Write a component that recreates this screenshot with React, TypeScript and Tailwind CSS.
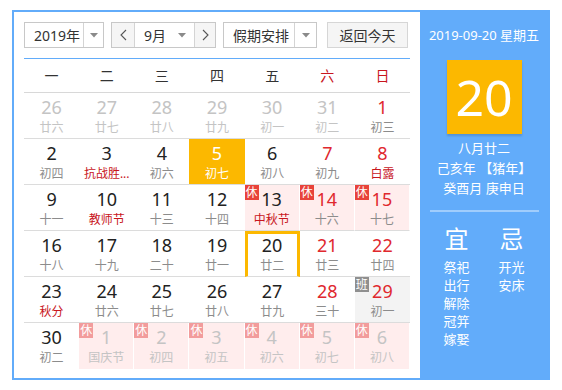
import React from 'react'

type Day = {
  d: number
  l: string
  m: number
  fest?: boolean
  rest?: '休' | '班'
  sel?: boolean
  today?: boolean
}

const days: Day[] = [
  { d: 26, l: '廿六', m: 8 },
  { d: 27, l: '廿七', m: 8 },
  { d: 28, l: '廿八', m: 8 },
  { d: 29, l: '廿九', m: 8 },
  { d: 30, l: '初一', m: 8 },
  { d: 31, l: '初二', m: 8 },
  { d: 1, l: '初三', m: 9 },
  { d: 2, l: '初四', m: 9 },
  { d: 3, l: '抗战胜...', m: 9, fest: true },
  { d: 4, l: '初六', m: 9 },
  { d: 5, l: '初七', m: 9, sel: true },
  { d: 6, l: '初八', m: 9 },
  { d: 7, l: '初九', m: 9 },
  { d: 8, l: '白露', m: 9, fest: true },
  { d: 9, l: '十一', m: 9 },
  { d: 10, l: '教师节', m: 9, fest: true },
  { d: 11, l: '十三', m: 9 },
  { d: 12, l: '十四', m: 9 },
  { d: 13, l: '中秋节', m: 9, fest: true, rest: '休' },
  { d: 14, l: '十六', m: 9, rest: '休' },
  { d: 15, l: '十七', m: 9, rest: '休' },
  { d: 16, l: '十八', m: 9 },
  { d: 17, l: '十九', m: 9 },
  { d: 18, l: '二十', m: 9 },
  { d: 19, l: '廿一', m: 9 },
  { d: 20, l: '廿二', m: 9, today: true },
  { d: 21, l: '廿三', m: 9 },
  { d: 22, l: '廿四', m: 9 },
  { d: 23, l: '秋分', m: 9, fest: true },
  { d: 24, l: '廿六', m: 9 },
  { d: 25, l: '廿七', m: 9 },
  { d: 26, l: '廿八', m: 9 },
  { d: 27, l: '廿九', m: 9 },
  { d: 28, l: '三十', m: 9 },
  { d: 29, l: '初一', m: 9, rest: '班' },
  { d: 30, l: '初二', m: 9 },
  { d: 1, l: '国庆节', m: 10, rest: '休' },
  { d: 2, l: '初四', m: 10, rest: '休' },
  { d: 3, l: '初五', m: 10, rest: '休' },
  { d: 4, l: '初六', m: 10, rest: '休' },
  { d: 5, l: '初七', m: 10, rest: '休' },
  { d: 6, l: '初八', m: 10, rest: '休' },
]

const weekdays = ['一', '二', '三', '四', '五', '六', '日']

function Caret() {
  return (
    <svg width="8" height="5" viewBox="0 0 8 5">
      <path d="M0 0h8L4 4.5z" fill="#8a8a8a" />
    </svg>
  )
}

function Chevron({ dir }: { dir: 'l' | 'r' }) {
  return (
    <svg width="7" height="12" viewBox="0 0 7 12">
      <polyline
        points={dir === 'l' ? '6,1 1,6 6,11' : '1,1 6,6 1,11'}
        fill="none"
        stroke="#555"
        strokeWidth="1.1"
      />
    </svg>
  )
}

function Cell({ c, i }: { c: Day; i: number }) {
  const col = i % 7
  const lastRow = i >= 35
  const other = c.m !== 9
  const weekend = col >= 5

  let bg = 'bg-white'
  if (c.sel) bg = 'bg-[#fcb800]'
  else if (c.rest === '休') bg = 'bg-[#ffeded]'
  else if (c.rest === '班') bg = 'bg-[#f3f3f3]'

  let numColor = 'text-[#222]'
  if (c.sel) numColor = 'text-white'
  else if (other) numColor = 'text-[#c4c4c4]'
  else if (weekend) numColor = 'text-[#e0282e]'

  let lunarColor = 'text-[#8c8c8c]'
  if (c.sel) lunarColor = 'text-white'
  else if (other) lunarColor = 'text-[#c4c4c4]'
  else if (c.fest) lunarColor = 'text-[#c8161d]'

  const badgeBg = c.rest === '班' ? 'bg-[#8f8f8f]' : other ? 'bg-[#f29c9c]' : 'bg-[#e8433a]'

  return (
    <div
      className={`relative h-[46px] box-border text-center ${bg} ${lastRow ? '' : 'border-b border-b-[#dcdcdc]'} ${
        c.rest === '休' ? 'border-r border-r-white' : ''
      } ${c.today ? 'border-[3px] border-[#fcb800] pt-0' : 'pt-[3px]'}`}
    >
      {c.rest && (
        <span
          className={`absolute left-0 top-0 flex h-[15px] w-[14px] items-center justify-center text-[12px] leading-none text-white ${badgeBg}`}
        >
          {c.rest}
        </span>
      )}
      <div className={`h-[23px] text-[18px] leading-[23px] ${numColor}`}>{c.d}</div>
      <div className={`h-[17px] text-[12px] leading-[17px] ${lunarColor}`}>{c.l}</div>
    </div>
  )
}

export default function App() {
  return (
    <div
      className="h-[390px] w-[562px] bg-white pl-[12px] pt-[10px]"
      style={{ fontFamily: '"Noto Sans", "Noto Sans CJK SC", sans-serif' }}
    >
      <div className="flex h-[370px] w-[538px] border-2 border-[#62acfa]">
        {/* left: calendar */}
        <div className="w-[406px] px-[10px] pt-[10px]">
          <div className="flex h-[26px] text-[14px] text-[#333]">
            <div className="flex w-[80px] border border-[#c8c8c8]">
              <div className="flex w-[58px] items-center pl-[9px]">2019年</div>
              <div className="flex flex-1 items-center justify-center border-l border-l-[#d4d4d4]">
                <Caret />
              </div>
            </div>
            <div className="ml-[7px] flex w-[105px] border border-[#c8c8c8]">
              <div className="flex w-[23px] items-center justify-center border-r border-r-[#d4d4d4] bg-[#f5f5f5]">
                <Chevron dir="l" />
              </div>
              <div className="flex w-[59px] items-center justify-between pl-[9px] pr-[8px]">
                <span>9月</span>
                <Caret />
              </div>
              <div className="flex flex-1 items-center justify-center border-l border-l-[#d4d4d4] bg-[#f5f5f5]">
                <Chevron dir="r" />
              </div>
            </div>
            <div className="ml-[7px] flex w-[94px] border border-[#c8c8c8]">
              <div className="flex w-[70px] items-center pl-[9px]">假期安排</div>
              <div className="flex flex-1 items-center justify-center border-l border-l-[#d4d4d4]">
                <Caret />
              </div>
            </div>
            <div className="ml-[10px] flex w-[81px] items-center justify-center border border-[#d6d6d6] bg-[#f5f5f5]">
              返回今天
            </div>
          </div>

          <div className="mt-[10px] h-px bg-[#62acfa]" />
          <div className="grid h-[34px] grid-cols-7 border-b border-b-[#d8d8d8] text-[14px]">
            {weekdays.map((w, i) => (
              <div
                key={w}
                className={`flex items-center justify-center ${i >= 5 ? 'text-[#c8161d]' : 'text-[#333]'}`}
              >
                {w}
              </div>
            ))}
          </div>
          <div className="grid grid-cols-7">
            {days.map((c, i) => (
              <Cell key={i} c={c} i={i} />
            ))}
          </div>
        </div>

        {/* right: detail */}
        <div className="flex flex-1 flex-col items-center bg-[#62acfa] pt-[14px] text-white">
          <div className="text-[13px] leading-[18px]">2019-09-20 星期五</div>
          <div className="mt-[16px] flex h-[74px] w-[75px] items-center justify-center bg-[#fcb800] text-[50px] leading-none shadow-[0_2px_2px_rgba(0,0,0,0.15)]">
            20
          </div>
          <div className="mt-[4px] text-center text-[13px] leading-[20px]">
            <div>八月廿二</div>
            <div>己亥年 【猪年】</div>
            <div>癸酉月 庚申日</div>
          </div>
          <div className="mt-[12px] h-[2px] w-[109px] bg-white/40" />
          <div className="mt-[13px] flex w-[110px]">
            <div className="flex w-[55px] flex-col items-center">
              <div className="text-[24px] leading-[28px]">宜</div>
              <div className="mt-[5px] text-[13px] leading-[18px]">
                <div>祭祀</div>
                <div>出行</div>
                <div>解除</div>
                <div>冠笄</div>
                <div>嫁娶</div>
              </div>
            </div>
            <div className="flex w-[55px] flex-col items-center">
              <div className="text-[24px] leading-[28px]">忌</div>
              <div className="mt-[5px] text-[13px] leading-[18px]">
                <div>开光</div>
                <div>安床</div>
              </div>
            </div>
          </div>
        </div>
      </div>
    </div>
  )
}
